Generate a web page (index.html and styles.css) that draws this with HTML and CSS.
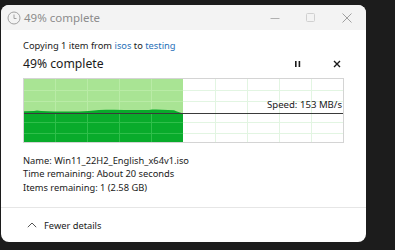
FILE: index.html
```html
<!DOCTYPE html>
<html lang="en">

<head>
    <meta charset="UTF-8">
    <meta name="viewport" content="width=device-width, initial-scale=1.0">
    <title>49% complete</title>

    <link rel="stylesheet" href="styles.css">
</head>

<body>
    <div class="window">
        <div class="titlebar">
            <svg class="title-icon" width="14" height="14" viewBox="0 0 14 14">
                <circle cx="7" cy="7" r="6" fill="none" stroke="#a0a0a0" stroke-width="1"/>
                <path d="M7 3.5V7.5H9.5" fill="none" stroke="#a0a0a0" stroke-width="1"/>
            </svg>
            <span class="title-text">49% complete</span>
            <div class="controls">
                <svg width="10" height="10" viewBox="0 0 10 10"><path d="M0.5 5.5H9.5" stroke="#b0b0b0" stroke-width="1"/></svg>
                <svg width="10" height="10" viewBox="0 0 10 10"><rect x="0.5" y="0.5" width="8" height="8" rx="1" fill="none" stroke="#d0d0d0" stroke-width="1"/></svg>
                <svg width="10" height="10" viewBox="0 0 10 10"><path d="M0.5 0.5L9.5 9.5M9.5 0.5L0.5 9.5" stroke="#a0a0a0" stroke-width="1"/></svg>
            </div>
        </div>

        <div class="content">
            <p class="copying">Copying 1 item from <span class="link">isos</span> to <span class="link">testing</span></p>
            <div class="progress-head">
                <span class="percent">49% complete</span>
                <div class="actions">
                    <svg width="8" height="8" viewBox="0 0 8 8"><rect x="1" y="1" width="1.6" height="6" fill="#1a1a1a"/><rect x="4.6" y="1" width="1.6" height="6" fill="#1a1a1a"/></svg>
                    <svg width="8" height="8" viewBox="0 0 8 8"><path d="M1 1L7 7M7 1L1 7" stroke="#1a1a1a" stroke-width="1.4"/></svg>
                </div>
            </div>

            <div class="chart">
                <svg width="319" height="63" viewBox="0 0 319 63">
                    <rect x="0" y="0" width="159" height="63" fill="#a9e494"/>
                    <g stroke="#e2f5e2" stroke-width="1">
                        <path d="M191.5 0V63M223.5 0V63M255.5 0V63M287.5 0V63"/>
                        <path d="M159 11.5H319M159 22.5H319M159 43.5H319M159 54.5H319"/>
                    </g>
                    <g stroke="#b9eba6" stroke-width="1">
                        <path d="M31.5 0V63M63.5 0V63M95.5 0V63M127.5 0V63"/>
                        <path d="M0 11.5H159M0 22.5H159"/>
                    </g>
                    <path d="M0 32.3L10 32L13 31.4L17 32L30 32.5L55 32.5L65 32L75 31L82 30.7L90 30.7L100 31L125 31L128 30.4L132 30.6L150 31.2L153 32.6L159 34.5V63H0Z" fill="#09ab2b"/>
                    <g stroke="#2fbf4a" stroke-width="1">
                        <path d="M31.5 35V63M63.5 35V63M95.5 35V63M127.5 35V63"/>
                        <path d="M0 43.5H159M0 54.5H159"/>
                    </g>
                    <path d="M0 34.5H319" stroke="#3a3a3a" stroke-width="1"/>
                </svg>
                <span class="speed">Speed: 153 MB/s</span>
            </div>

            <div class="details">
                <p>Name: Win11_22H2_English_x64v1.iso</p>
                <p>Time remaining: About 20 seconds</p>
                <p>Items remaining: 1 (2.58 GB)</p>
            </div>
        </div>

        <div class="footer">
            <svg width="10" height="6" viewBox="0 0 10 6"><path d="M0.8 5.2L5 1L9.2 5.2" fill="none" stroke="#555" stroke-width="1"/></svg>
            <span>Fewer details</span>
        </div>
    </div>
</body>

</html>
```

FILE: styles.css
```css
:root {
    --text-color: #1a1a1a;
    --link-color: #1f6fb8;
    --line-color: #e6e6e6;
    --background-color: #1c1c1c;
}

* {
    margin: 0;
    padding: 0;
    box-sizing: border-box;
}

body {
    background-color: var(--background-color);
    font-family: "Noto Sans", "Open Sans", sans-serif;
    color: var(--text-color);
    width: 395px;
    height: 250px;
    overflow: hidden;
    padding: 5px 0 0 1px;
}

.window {
    width: 365px;
    height: 237px;
    background-color: #fff;
    border-radius: 8px;
    overflow: hidden;
    display: flex;
    flex-direction: column;
}

.titlebar {
    height: 25px;
    background-color: #f3f3f3;
    display: flex;
    align-items: center;
    padding-left: 6px;
}

.title-icon {
    margin-right: 3px;
}

.title-text {
    font-size: 11.5px;
    color: #8c8c8c;
}

.controls {
    margin-left: auto;
    display: flex;
    align-items: center;
    gap: 26px;
    padding-right: 14px;
}

.content {
    padding: 8px 22px 0 22px;
}

.copying {
    font-size: 9.3px;
    line-height: 16px;
}

.link {
    color: var(--link-color);
}

.progress-head {
    display: flex;
    align-items: center;
    height: 20px;
    margin-top: -1px;
}

.percent {
    font-size: 12.2px;
}

.actions {
    margin-left: auto;
    display: flex;
    align-items: center;
    gap: 31px;
    padding-right: 3px;
    padding-top: 2px;
}

.chart {
    position: relative;
    margin-top: 5px;
    width: 321px;
    height: 65px;
    border: 1px solid #d4d4d4;
}

.chart svg {
    display: block;
}

.speed {
    position: absolute;
    right: 1px;
    top: 19px;
    font-size: 9.6px;
    line-height: 13px;
}

.details {
    margin-top: 11px;
    font-size: 9.3px;
    line-height: 13.3px;
}

.footer {
    margin-top: auto;
    height: 35px;
    border-top: 1px solid var(--line-color);
    display: flex;
    align-items: center;
    padding-left: 26px;
    gap: 7px;
    font-size: 9.3px;
}
```
